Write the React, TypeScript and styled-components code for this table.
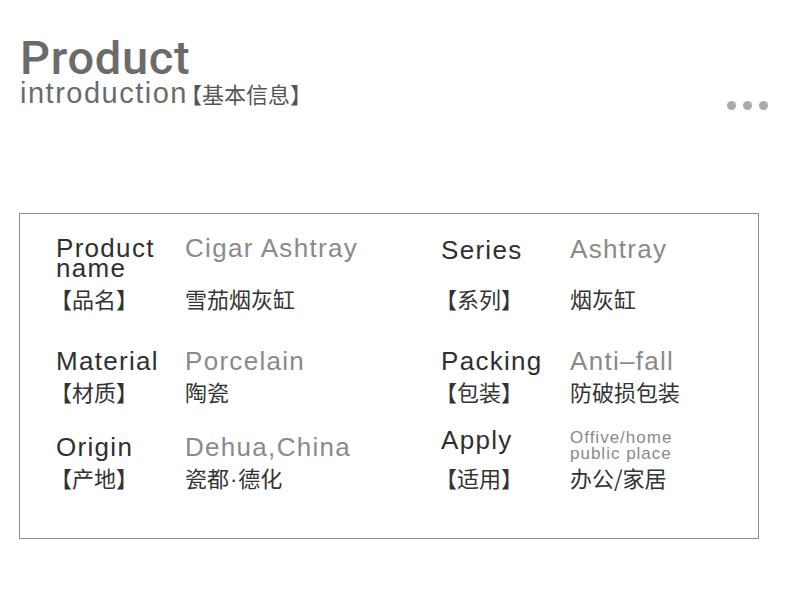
import styled, { createGlobalStyle } from "styled-components";

interface Field {
  label: string;
  value: string;
  cnLabel: string;
  cnValue: string;
  small?: boolean;
  nudge?: number;
  valueNudge?: number;
}

interface Row {
  gap: number;
  fields: Field[];
}

const rows: Row[] = [
  {
    gap: 42,
    fields: [
      { label: "Product name", value: "Cigar Ashtray", cnLabel: "【品名】", cnValue: "雪茄烟灰缸" },
      { label: "Series", value: "Ashtray", cnLabel: "【系列】", cnValue: "烟灰缸", nudge: 2, valueNudge: 1 },
    ],
  },
  {
    gap: 35,
    fields: [
      { label: "Material", value: "Porcelain", cnLabel: "【材质】", cnValue: "陶瓷" },
      { label: "Packing", value: "Anti–fall", cnLabel: "【包装】", cnValue: "防破损包装" },
    ],
  },
  {
    gap: 0,
    fields: [
      { label: "Origin", value: "Dehua,China", cnLabel: "【产地】", cnValue: "瓷都·德化" },
      {
        label: "Apply",
        value: "Offive/home\npublic place",
        cnLabel: "【适用】",
        cnValue: "办公/家居",
        small: true,
        nudge: -7,
        valueNudge: -7,
      },
    ],
  },
];

const GlobalStyle = createGlobalStyle`
  html, body {
    margin: 0;
    padding: 0;
    background: #ffffff;
  }
  body {
    font-family: "Liberation Sans", "Noto Sans CJK SC", sans-serif;
  }
`;

const Page = styled.div`
  width: 790px;
  height: 592px;
  box-sizing: border-box;
  padding: 36px 0 0 19px;
  overflow: hidden;
`;

const Header = styled.header`
  display: flex;
  justify-content: space-between;
  align-items: flex-end;
  padding-right: 22px;
`;

const TitleBlock = styled.div`
  padding-left: 1px;
  color: #6b6b6b;
`;

const Title = styled.h1`
  margin: 0;
  font-family: Roboto, "Liberation Sans", sans-serif;
  font-size: 47px;
  line-height: 44px;
  font-weight: 500;
  letter-spacing: 0.7px;
`;

const Subtitle = styled.div`
  font-size: 29px;
  line-height: 27px;
  letter-spacing: 1.5px;
`;

const SubtitleCn = styled.span`
  margin-left: -8px;
  font-family: "Noto Sans CJK SC", sans-serif;
  font-size: 22px;
  letter-spacing: 0;
  color: #555555;
`;

const Dots = styled.div`
  display: flex;
  gap: 7px;
  margin-bottom: -3px;
`;

const Dot = styled.span`
  width: 9px;
  height: 9px;
  border-radius: 50%;
  background: #ababab;
`;

const Box = styled.section`
  width: 740px;
  height: 326px;
  margin-top: 106px;
  box-sizing: border-box;
  border: 1px solid #8d8c9c;
  padding: 24px 0 0 36px;
`;

const Grid = styled.div`
  display: grid;
  grid-template-columns: 129px 256px 129px 1fr;
  align-items: start;
`;

const EnLabel = styled.div<{ $nudge?: number }>`
  margin-top: ${(p) => p.$nudge ?? 0}px;
  padding-bottom: 9px;
  font-size: 26px;
  line-height: 20px;
  letter-spacing: 1.3px;
  color: #2f2f2f;
`;

const EnValue = styled.div<{ $nudge?: number; $small?: boolean }>`
  margin-top: ${(p) => p.$nudge ?? 0}px;
  padding-bottom: ${(p) => (p.$small ? 0 : 9)}px;
  white-space: pre-line;
  font-size: ${(p) => (p.$small ? 17 : 26)}px;
  line-height: ${(p) => (p.$small ? 16 : 20)}px;
  letter-spacing: ${(p) => (p.$small ? 1 : 1.3)}px;
  color: #8a8a8a;
`;

const CnText = styled.div<{ $gap: number }>`
  padding-bottom: ${(p) => p.$gap}px;
  font-family: "Noto Sans CJK SC", sans-serif;
  font-size: 22px;
  line-height: 22px;
  color: #333333;
`;

const CnLabel = styled(CnText)`
  margin-left: -6px;
`;

const MidDot = styled.span`
  font-family: "Liberation Sans", sans-serif;
  margin: 0 1px;
`;

function withDots(text: string) {
  const parts = text.split("·");
  return parts.flatMap((part, i) =>
    i === 0 ? [part] : [<MidDot key={i}>·</MidDot>, part]
  );
}

export default function App() {
  return (
    <>
      <GlobalStyle />
      <Page>
        <Header>
          <TitleBlock>
            <Title>Product</Title>
            <Subtitle>
              introduction<SubtitleCn>【基本信息】</SubtitleCn>
            </Subtitle>
          </TitleBlock>
          <Dots>
            <Dot />
            <Dot />
            <Dot />
          </Dots>
        </Header>
        <Box>
          <Grid>
            {rows.map((row, i) => [
              ...row.fields.flatMap((f) => [
                <EnLabel key={`l${i}${f.label}`} $nudge={f.nudge}>
                  {f.label}
                </EnLabel>,
                <EnValue key={`v${i}${f.label}`} $nudge={f.valueNudge} $small={f.small}>
                  {f.value}
                </EnValue>,
              ]),
              ...row.fields.flatMap((f) => [
                <CnLabel key={`cl${i}${f.label}`} $gap={row.gap}>
                  {f.cnLabel}
                </CnLabel>,
                <CnText key={`cv${i}${f.label}`} $gap={row.gap}>
                  {withDots(f.cnValue)}
                </CnText>,
              ]),
            ])}
          </Grid>
        </Box>
      </Page>
    </>
  );
}
